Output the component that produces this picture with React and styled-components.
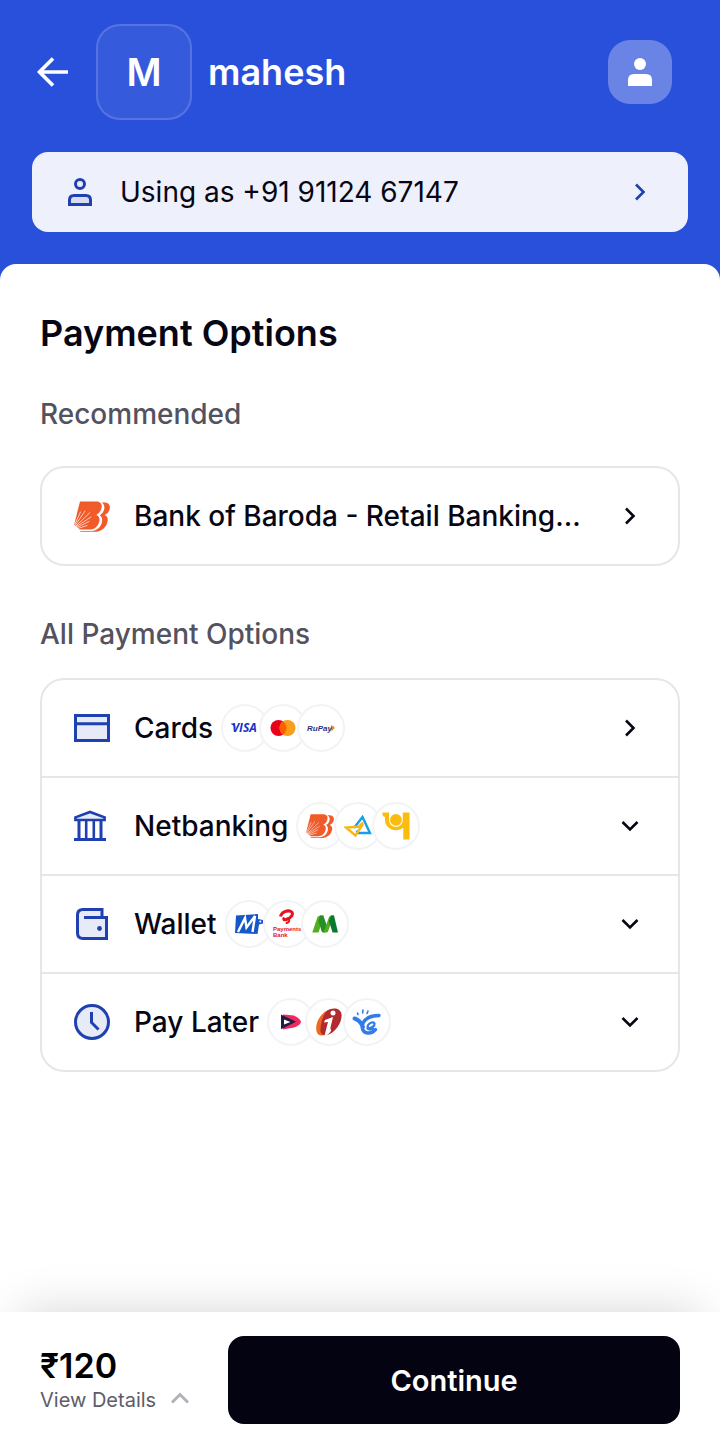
import React from "react";
import styled, { createGlobalStyle } from "styled-components";

const GlobalStyle = createGlobalStyle`
  *, *::before, *::after { box-sizing: border-box; }
  body { margin: 0; background: #fff; font-family: Inter, "Liberation Sans", sans-serif; color: #070614; }
  button { font: inherit; color: inherit; border: 0; padding: 0; background: none; cursor: pointer; text-align: left; }
  svg { display: block; flex: none; }
  h1, h2, h3, p, ul { margin: 0; padding: 0; font-weight: inherit; }
`;

const Page = styled.div`
  min-height: 100vh;
  display: flex;
  flex-direction: column;
  background: #2950da;
`;

const Header = styled.header`
  padding: 24px 32px 32px;
  display: flex;
  flex-direction: column;
  gap: 32px;
`;

const TopBar = styled.div`
  display: flex;
  align-items: center;
  gap: 16px;
  padding-right: 16px;
`;

const BackButton = styled.button`
  width: 48px;
  height: 48px;
  display: flex;
  align-items: center;
`;

const MerchantLogo = styled.div`
  width: 96px;
  height: 96px;
  flex: none;
  display: grid;
  place-items: center;
  border: 2px solid rgba(255, 255, 255, 0.16);
  border-radius: 24px;
  background: rgba(255, 255, 255, 0.06);
  color: #fff;
  font-size: 38px;
  line-height: 48px;
  font-weight: 600;
`;

const MerchantName = styled.h1`
  flex: 1;
  color: #fff;
  font-size: 36px;
  line-height: 48px;
  font-weight: 600;
`;

const ProfileButton = styled.button`
  width: 64px;
  height: 64px;
  flex: none;
  display: grid;
  place-items: center;
  border-radius: 22px;
  background: rgba(255, 255, 255, 0.3);
`;

const AccountBar = styled.button`
  display: flex;
  align-items: center;
  gap: 28px;
  width: 100%;
  height: 80px;
  padding: 0 36px;
  border-radius: 16px;
  background: #eef0fb;
  font-size: 28px;
`;

const Grow = styled.span`
  flex: 1;
  min-width: 0;
  overflow: hidden;
  text-overflow: ellipsis;
  white-space: nowrap;
`;

const Sheet = styled.main`
  flex: 1;
  padding: 44px 40px 48px;
  border-radius: 16px 16px 0 0;
  background: #fff;
`;

const Title = styled.h2`
  font-size: 36px;
  line-height: 50px;
  font-weight: 600;
`;

const SectionLabel = styled.h3`
  margin: ${(p) => p.$space};
  color: #53525e;
  font-size: 28px;
  line-height: 40px;
  font-weight: 500;
`;

const Card = styled.ul`
  list-style: none;
  border: 2px solid #e6e6e8;
  border-radius: 24px;
`;

const CardItem = styled.li`
  & + & { border-top: 2px solid #e6e6e8; }
`;

const Row = styled.button`
  display: flex;
  align-items: center;
  width: 100%;
  height: 96px;
  padding: 0 36px 0 32px;
  font-size: 28px;
  font-weight: 500;
`;

const RowIcon = styled.span`
  width: 36px;
  margin-right: 24px;
  flex: none;
  display: grid;
  justify-items: ${(p) => (p.$start ? "start" : "center")};
`;

const Badges = styled.span`
  flex: 1;
  display: flex;
  margin-left: 8px;
`;

const Badge = styled.span`
  width: 48px;
  height: 48px;
  flex: none;
  display: grid;
  place-items: center;
  border: 2px solid #f2f3f5;
  border-radius: 50%;
  background: #fff;
  & + & { margin-left: -10px; }
`;

const Footer = styled.footer`
  position: sticky;
  bottom: 0;
  display: flex;
  align-items: center;
  gap: 24px;
  padding: 24px 40px 23px;
  background: #fff;
  box-shadow: 0 -20px 48px -20px rgba(0, 0, 0, 0.17);
`;

const Total = styled.div`
  min-width: 164px;
`;

const Amount = styled.p`
  color: #000;
  font-size: 34px;
  line-height: 40px;
  font-weight: 600;
`;

const DetailsButton = styled.button`
  display: flex;
  align-items: center;
  gap: 14px;
  color: #5d5c68;
  font-size: 20px;
  line-height: 28px;
`;

const ContinueButton = styled.button`
  flex: 1;
  height: 88px;
  border-radius: 16px;
  background: #040312;
  color: #fff;
  font-size: 29px;
  font-weight: 600;
  text-align: center;
`;

const Chevron = ({ dir = "right", color = "#070614" }) => (
  <svg width="24" height="24" viewBox="0 0 24 24" fill="none" stroke={color} strokeWidth="2.6" aria-hidden="true">
    <path d={dir === "right" ? "M8 4.500 15.500 12 8 19.500" : "M4.500 8 12 15.500 19.500 8"} />
  </svg>
);

const BarodaLogo = ({ width = 36 }) => (
  <svg width={width} height={width * 31 / 36} viewBox="0 0 36 31" aria-hidden="true">
    <path fill="#f15a29" d="M6 .4h16c4.600 0 6.600 3 5.400 7-.8 2.900-2.600 5-5.200 6.500 3 1.200 3.900 3.600 3 6.800C23.800 25.600 20.600 28.500 16 28.500H5.500L.2 23.500Z" />
    <path fill="#f15a29" d="M27.500 1.600h2.500c4.500 0 6.800 2.700 5.600 6.900-.8 2.700-2.500 4.500-5 5.500 2.800 1.200 3.700 3.500 2.900 6.700-1.400 5.700-5.500 9.500-11.600 10H7l-1.500-.8h12c5.700-.5 9.400-3.700 10.500-9 .6-3-.2-5.200-2.200-6.700 2.300-1.500 3.800-3.500 4.400-6 .7-3-.5-5.500-2.700-6.600Z" />
    <g stroke="#fff" strokeWidth=".7" strokeLinecap="round" fill="none">
      <path d="M1 23 6.500 11M1.500 24 11 10M2 25 16 11.500M2.500 25.500 17 16M3 26.500 15 20.500M4 27.500l9-3" />
    </g>
  </svg>
);

const VisaLogo = () => (
  <svg width="32" height="16" viewBox="0 0 32 16" aria-hidden="true">
    <path d="M2 3.500h3.500l1.400 5Q5.700 5.600 2 4Z" fill="#1434cb" />
    <text x="3" y="12" fontFamily="Open Sans, sans-serif" fontSize="12" fontWeight="700" fontStyle="italic" fill="#1434cb">VISA</text>
  </svg>
);

const MastercardLogo = () => (
  <svg width="26" height="18" viewBox="0 0 26 18" aria-hidden="true">
    <circle cx="8.500" cy="9" r="8" fill="#eb001b" />
    <circle cx="17.500" cy="9" r="8" fill="#f79e1b" />
    <path d="M13 2.400a8 8 0 0 1 0 13.200 8 8 0 0 1 0-13.200Z" fill="#ff5f00" />
  </svg>
);

const RupayLogo = () => (
  <svg width="30" height="14" viewBox="0 0 30 14" aria-hidden="true">
    <text x="1" y="9.500" fontFamily="Liberation Sans, sans-serif" fontSize="8" fontWeight="700" fontStyle="italic" fill="#302f82">RuPay</text>
    <path d="M25.500 4 27 7l-2.800 3.500Z" fill="#1b8a44" />
    <path d="M26.800 4 28.800 7l-3.500 3.500Z" fill="#f08a20" />
  </svg>
);

const AxisTriangleLogo = () => (
  <svg width="28" height="22" viewBox="0 0 28 22" fill="none" strokeWidth="2.400" aria-hidden="true">
    <path d="M10 13 18.500 2 26 18H14.500L12.500 15.500" stroke="#14a0e8" />
    <path d="M15 11.500 19 7.500M19 9 11.500 20.500 2 12.500 16.500 11.500" stroke="#fbb616" />
  </svg>
);

const PnbLogo = () => (
  <svg width="28" height="28" viewBox="0 0 28 28" aria-hidden="true">
    <path fill="#fbbc0b" d="M.5.500h6.500v7.500a6.900 6.900 0 0 0 13.800 0V.500h6.700V27.500h-6.200V15.500c-2 1.800-4.500 2.700-7.300 2.700-6 0-11-4.200-11-10.200V5Q.5 4.500.5 2.500Z" />
    <circle cx="13.900" cy="7.800" r="5.900" fill="#fbbc0b" />
  </svg>
);

const MobikwikLogo = () => (
  <svg width="30" height="24" viewBox="0 0 30 24" aria-hidden="true">
    <path fill="#1557c8" d="M2 3.500 24 2V7L29 8v3.500l-4 1-1.500 9.500L1 21Z" />
    <circle cx="26.300" cy="9.500" r="1" fill="#fff" />
    <path d="m4 20 7-14 1.500 9.500 8.500-11.500-2.500 16" fill="none" stroke="#fff" strokeWidth="2.400" />
  </svg>
);

const AirtelLogo = () => (
  <svg width="30" height="30" viewBox="0 0 30 30" aria-hidden="true">
    <path d="M8.500 7.500C9.500 3 15.500.8 19 2.500c3.800 2-.5 6.800-4.500 8-2.500.8-3.500-.2-2-1.700" fill="none" stroke="#e4151f" strokeWidth="3" />
    <path d="M13.500 10.500c2-1.500 4-1 3.800.8-.2 1.900-2 3-3.500 2.500" fill="none" stroke="#e4151f" strokeWidth="2" />
    <text x="1" y="22" fontFamily="Liberation Sans, sans-serif" fontSize="6" fontWeight="700" fill="#e4151f">Payments</text>
    <text x="1" y="28" fontFamily="Liberation Sans, sans-serif" fontSize="6" fontWeight="700" fill="#e4151f">Bank</text>
  </svg>
);

const GreenMLogo = () => (
  <svg width="26" height="18" viewBox="0 0 26 18" aria-hidden="true">
    <path fill="#4faf20" d="M5.500 2q1-1.500 3-1.500h2.800L7 16.500q-.4 1-1.500 1H.3Z" />
    <path fill="#268f26" d="M8 .5h3.300L15 11 13 17.500h-1.500q-1.500 0-2-1.500L6.500 6Z" />
    <path fill="#4faf20" d="M17 2q1-1.500 2.500-1.500H22l-6 16q-.4 1-1.500 1h-3Z" />
    <path fill="#08782f" d="M19 .5h3L26 17.500h-5.500L17 6Z" />
  </svg>
);

const LazypayLogo = () => (
  <svg width="22" height="16" viewBox="0 0 22 16" fill="none" aria-hidden="true">
    <path d="M3 .5 14 1.500Q20.500 5 21 8q-.5 3-7 5.500L3 15.500Z" fill="#ef2a5a" />
    <path d="M1 .5 16 7.800 1 15.200Z" fill="#231b46" />
    <path d="M4 5.500 10.500 8 4 10.500Z" fill="#fff" />
  </svg>
);

const IciciLogo = () => (
  <svg width="28" height="30" viewBox="0 0 28 30" aria-hidden="true">
    <path fill="#f0671d" d="M11 4C4 9 0 17 1.500 24c1 5 6 5.500 10 3Z" />
    <path fill="#b02a30" d="M12 3.500C18 0 25.500 1 26.500 7c1 8-6 18.500-14 21-4.500 1-7.500-1.500-7-6 .5-8 3-14.500 6.500-18.500Z" />
    <circle cx="18" cy="6" r="2.500" fill="#fff" />
    <path fill="#fff" d="m10 13 8-3L15.500 20.500q-.4 2 .8 3-1.500 3-5 5.300H9.500L13 15l-4 .5Z" />
  </svg>
);

const YelloLogo = () => (
  <svg width="30" height="28" viewBox="0 0 30 28" fill="none" stroke="#327bea" strokeLinecap="round" aria-hidden="true">
    <path d="M2.500 10.500Q8 12 11 19" strokeWidth="4" />
    <path d="M27 7.500Q15 7.500 11 15c-2 5 0 9.500 4.500 10 4 .3 6.500-1.500 8-3.500" strokeWidth="3.400" />
    <path d="M15.500 20.500c4.500-.5 7.500-2.500 7-5-1-2.500-7-.5-7 4 0 2.500 3.500 2.500 5.500 1" strokeWidth="2.200" />
    <path d="m5.500 5 .5 1.500M11 2l-.3 3M16 3l-1 2.500" strokeWidth="1.600" />
  </svg>
);

const CardIcon = () => (
  <svg width="36" height="28" viewBox="0 0 36 28" aria-hidden="true">
    <path d="M1.500 1.500h33v25h-33Z" fill="#e7eaf7" stroke="#1f40b0" strokeWidth="3" />
    <path d="M1.500 9.800h33" stroke="#1f40b0" strokeWidth="3" />
  </svg>
);

const BankIcon = () => (
  <svg width="32" height="32" viewBox="0 0 32 32" fill="none" stroke="#1f40b0" aria-hidden="true">
    <path d="M1.400 7.400 16 2l14.600 5.400V10H1.400Z" fill="#e7eaf7" strokeWidth="2.600" />
    <path d="M5 10v19M27 10v19" strokeWidth="3" />
    <path d="M12.200 10v19M19.800 10v19" strokeWidth="2.600" />
    <path d="M0 29.500h32" strokeWidth="3" />
  </svg>
);

const WalletIcon = () => (
  <svg width="32" height="32" viewBox="0 0 32 32" aria-hidden="true">
    <path d="M26 9.500V1.500H7Q1.500 1.500 1.500 7v18q0 5.500 5.500 5.500h23.500v-21H8" fill="#e7eaf7" stroke="#1f40b0" strokeWidth="3" />
    <circle cx="23.500" cy="20.500" r="2.400" fill="#1f40b0" />
  </svg>
);

const ClockIcon = () => (
  <svg width="36" height="36" viewBox="0 0 36 36" aria-hidden="true">
    <circle cx="18" cy="18" r="16.500" fill="#e7eaf7" stroke="#1f40b0" strokeWidth="3" />
    <path d="M17.500 8v10.500l7 7" fill="none" stroke="#1f40b0" strokeWidth="3" />
  </svg>
);

const SmallBarodaLogo = () => <BarodaLogo width={28} />;

const OPTIONS = [
  { name: "Cards", icon: CardIcon, dir: "right", logos: [VisaLogo, MastercardLogo, RupayLogo] },
  { name: "Netbanking", icon: BankIcon, start: true, dir: "down", logos: [SmallBarodaLogo, AxisTriangleLogo, PnbLogo] },
  { name: "Wallet", icon: WalletIcon, dir: "down", logos: [MobikwikLogo, AirtelLogo, GreenMLogo] },
  { name: "Pay Later", icon: ClockIcon, dir: "down", logos: [LazypayLogo, IciciLogo, YelloLogo] },
];

export default function App() {
  return (
    <>
      <GlobalStyle />
      <Page>
        <Header>
          <TopBar>
            <BackButton aria-label="Back">
              <svg width="40" height="40" viewBox="0 0 40 40" fill="none" stroke="#fff" strokeWidth="3.600" aria-hidden="true">
                <path d="M36 20H7M21 6.500 7.500 20 21 33.500" />
              </svg>
            </BackButton>
            <MerchantLogo>M</MerchantLogo>
            <MerchantName>mahesh</MerchantName>
            <ProfileButton aria-label="Profile">
              <svg width="24" height="28" viewBox="0 0 24 28" fill="#fff" aria-hidden="true">
                <circle cx="12" cy="6" r="6" />
                <path d="M0 28v-6q0-6 6-6h12q6 0 6 6v6Z" />
              </svg>
            </ProfileButton>
          </TopBar>
          <AccountBar>
            <svg width="24" height="28" viewBox="0 0 24 28" fill="none" stroke="#1f40b0" strokeWidth="3" aria-hidden="true">
              <circle cx="12" cy="6" r="4.500" />
              <path d="M1.500 26.500V22q0-4.500 4.500-4.500h12q4.500 0 4.500 4.500v4.500Z" fill="#d8ddf2" />
            </svg>
            <Grow>Using as +91 91124 67147</Grow>
            <Chevron color="#1f40b0" />
          </AccountBar>
        </Header>
        <Sheet>
          <Title>Payment Options</Title>
          <SectionLabel $space="36px 0 32px">Recommended</SectionLabel>
          <Card>
            <CardItem>
              <Row>
                <RowIcon><BarodaLogo /></RowIcon>
                <Grow>Bank of Baroda - Retail Banking...</Grow>
                <Chevron />
              </Row>
            </CardItem>
          </Card>
          <SectionLabel $space="48px 0 24px">All Payment Options</SectionLabel>
          <Card>
            {OPTIONS.map(({ name, icon: Icon, start, dir, logos }) => (
              <CardItem key={name}>
                <Row>
                  <RowIcon $start={start}><Icon /></RowIcon>
                  {name}
                  <Badges>
                    {logos.map((Logo, i) => (
                      <Badge key={i}><Logo /></Badge>
                    ))}
                  </Badges>
                  <Chevron dir={dir} />
                </Row>
              </CardItem>
            ))}
          </Card>
        </Sheet>
        <Footer>
          <Total>
            <Amount>₹120</Amount>
            <DetailsButton>
              View Details
              <svg width="20" height="16" viewBox="0 0 20 16" fill="none" stroke="#b0b0b8" strokeWidth="2.800" aria-hidden="true">
                <path d="m2 10.500 8-8 8 8" />
              </svg>
            </DetailsButton>
          </Total>
          <ContinueButton>Continue</ContinueButton>
        </Footer>
      </Page>
    </>
  );
}
